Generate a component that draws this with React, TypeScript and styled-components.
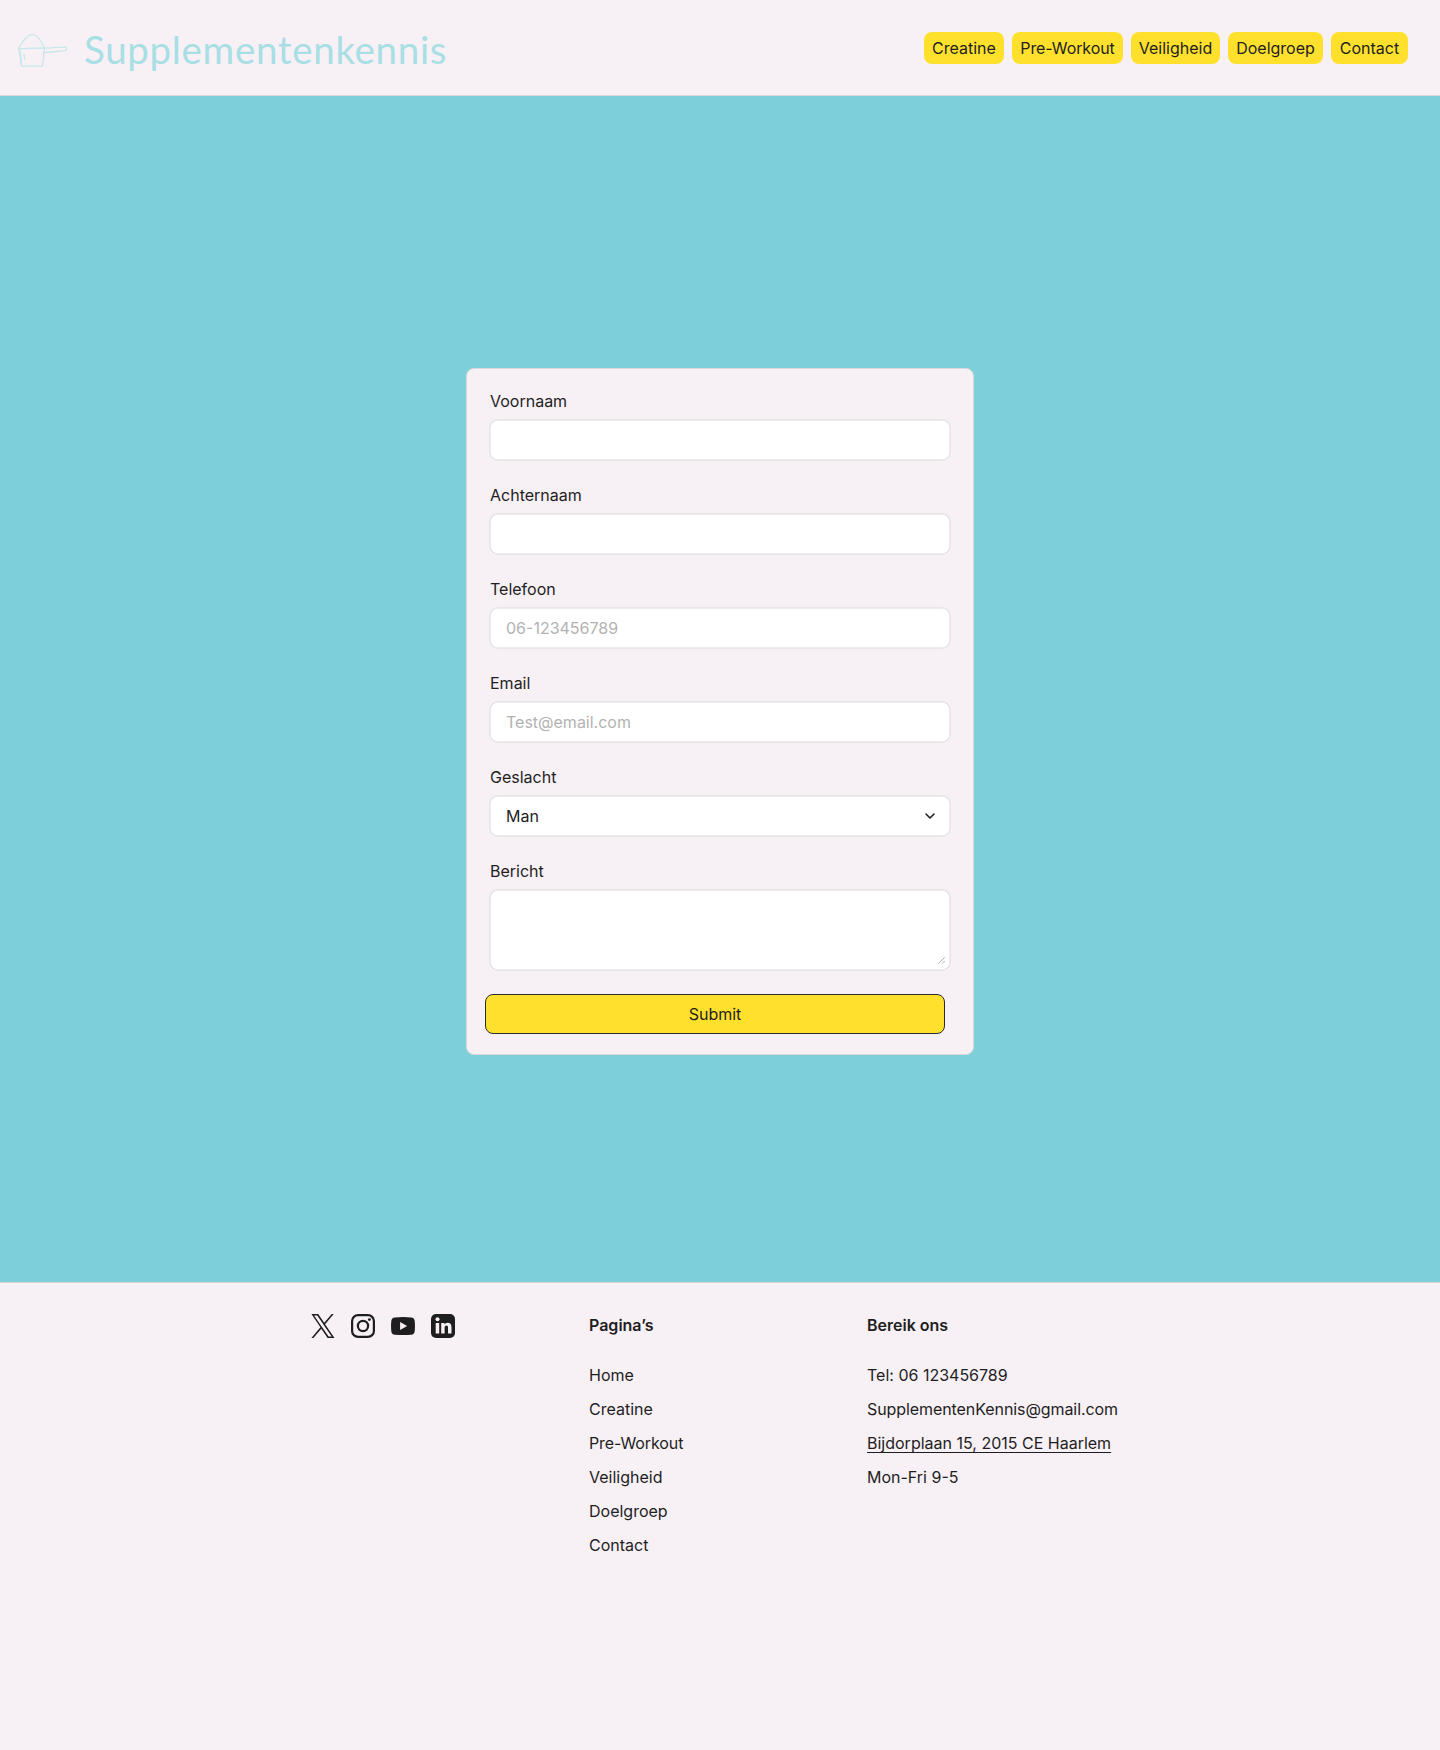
import React from 'react';
import styled, { createGlobalStyle } from 'styled-components';

const Global = createGlobalStyle`
  * { box-sizing: border-box; }
  body { margin: 0; background: #f7f0f5; color: #1e1e1e; font: 400 16px/22.4px Inter, sans-serif; }
  ul { list-style: none; margin: 0; padding: 0; }
  a { color: inherit; text-decoration: none; }
`;

const Page = styled.div`
  display: flex;
  flex-direction: column;
  width: 1440px;
  height: 1750px;
  background: #f7f0f5;
`;

const Header = styled.header`
  display: flex;
  align-items: center;
  justify-content: space-between;
  height: 96px;
  padding: 0 32px 0 16px;
  border-bottom: 1px solid #d9d9d9;
`;

const Brand = styled.a`
  display: flex;
  align-items: flex-start;
  gap: 16px;
  height: 62px;
`;

const Mark = styled.svg`
  margin-top: 16px;
`;

const Wordmark = styled.span`
  margin-top: 8px;
  font: 400 38.5px/48px Lato, sans-serif;
  letter-spacing: 0.68px;
  color: #a8dfe5;
  white-space: nowrap;
`;

const Nav = styled.nav`
  display: flex;
  gap: 8px;
`;

const NavLink = styled.a<{ $width: number; $tracking?: string }>`
  width: ${(p) => p.$width}px;
  height: 32px;
  padding: 8px 0;
  border-radius: 8px;
  background: #ffe12d;
  line-height: 16px;
  letter-spacing: ${(p) => p.$tracking ?? 'normal'};
  text-align: center;
  white-space: nowrap;
`;

const Main = styled.main`
  display: flex;
  justify-content: center;
  height: 1186px;
  padding-top: 272px;
  background: #7dcfda;
`;

const Card = styled.form`
  display: flex;
  flex-direction: column;
  gap: 24px;
  width: 508px;
  height: 687px;
  padding: 21px 23px 20px;
  border: 1px solid #d9d9d9;
  border-radius: 8px;
  background: #f7f0f5;
`;

const Field = styled.label`
  display: flex;
  flex-direction: column;
  gap: 8px;
  line-height: 22px;
`;

const control = `
  display: block;
  width: 460px;
  height: 40px;
  margin: 0;
  padding: 0 16px;
  border: 0;
  border-radius: 8px;
  outline: none;
  background: #fff;
  box-shadow: 0 0 0 0.5px #d9d9d9, inset 0 0 0 0.5px #d9d9d9;
  color: #1e1e1e;
  font: 400 16px/16px Inter, sans-serif;
`;

const Input = styled.input`
  ${control}
  &::placeholder { color: #b3b3b3; opacity: 1; }
`;

const SelectFrame = styled.span`
  ${control}
  display: flex;
  align-items: center;
  justify-content: space-between;
  padding: 0 12px 0 16px;
`;

const TextBox = styled.span`
  ${control}
  display: flex;
  align-items: flex-end;
  justify-content: flex-end;
  height: 80px;
  padding: 0 5px 6px 0;
`;

const Submit = styled.button`
  flex-shrink: 0;
  width: 460px;
  height: 40px;
  margin-left: -5px;
  padding: 0;
  border: 1px solid #2c2c2c;
  border-radius: 8px;
  background: #ffe12d;
  color: #1e1e1e;
  font: 400 16px/16px Inter, sans-serif;
`;

const Footer = styled.footer`
  display: grid;
  grid-template-columns: 262px 262px 262px;
  column-gap: 16px;
  flex: 1;
  padding: 31px 0 0 311px;
  border-top: 1px solid #d9d9d9;
`;

const Socials = styled.div`
  display: flex;
  gap: 16px;
  height: 24px;
`;

const Heading = styled.h2`
  margin: 0 0 28px;
  font: 600 16px/22px Inter, sans-serif;
`;

const Links = styled.ul`
  display: flex;
  flex-direction: column;
  gap: 12px;
  white-space: nowrap;
`;

const Item = styled.li<{ $underlined?: boolean; $tracking?: string }>`
  line-height: 22px;
  letter-spacing: ${(p) => p.$tracking ?? 'normal'};
  text-decoration: ${(p) => (p.$underlined ? 'underline' : 'none')};
  text-decoration-thickness: 1px;
  text-underline-offset: 3px;
  text-decoration-skip-ink: none;
`;

const Scoop = () => (
  <Mark width="52" height="38" viewBox="0 0 52 38" fill="none" stroke="#bfe7e9" strokeWidth="1.2" strokeLinecap="round" strokeLinejoin="round">
    <path d="M3 16 5.500 33H26.500L28.500 15" />
    <path d="M2.500 15.500C4 11.500 7 8.500 10 5 12 2.500 14 1.500 16.500 1.500 21 2 24.500 6.500 28.500 15" />
    <path d="M2.500 16.500C10 14 20 15.500 29 15 37 15 42 14 50 14L50.500 15 50 17.500C43 18 36 19.500 28.500 19.500M4 18.500 5.500 31M8 21C8 23 8.500 25 9 26" />
  </Mark>
);

const XLogo = () => (
  <svg width="24" height="24" viewBox="0 0 24 24" fill="#1e1e1e">
    <path fillRule="evenodd" d="M14.1 10.200 22.700 0h-2L13.200 8.800 7.200 0H.4l9 13.300L.4 24h2l7.900-9.300L16.600 24h6.900L14.100 10.200Zm-2.800 3.300-.9-1.300L3.100 1.600h3.100l5.900 8.500.9 1.300 7.700 11.100h-3.100l-6.300-9Z" />
  </svg>
);

const InstagramLogo = () => (
  <svg width="24" height="24" viewBox="0 0 24 24" fill="none" stroke="#1e1e1e" strokeWidth="2.200">
    <rect x="1.100" y="1.100" width="21.800" height="21.800" rx="6" />
    <circle cx="12" cy="12" r="5.100" />
    <circle cx="18.400" cy="5.600" r="1.450" fill="#1e1e1e" stroke="none" />
  </svg>
);

const YoutubeLogo = () => (
  <svg width="24" height="24" viewBox="0 0 24 24" fill="#1e1e1e">
    <path fillRule="evenodd" d="M3.800 3.400Q12 2.800 20.200 3.400 23.300 3.600 23.700 7 24.200 12 23.700 17.200 23.300 20.500 20.200 20.700 12 21.200 3.800 20.700.7 20.500.3 17.200-.2 12 .3 7 .7 3.600 3.800 3.400ZM9.100 8.100v7.800l7-3.900Z" />
  </svg>
);

const LinkedinLogo = () => (
  <svg width="24" height="24" viewBox="0 0 24 24">
    <rect width="24" height="24" rx="5" fill="#1e1e1e" />
    <g fill="#f7f0f5">
      <circle cx="6.500" cy="5.300" r="2" />
      <path d="M4.700 9h3.500v10.500H4.700ZM10.200 9h3.300v1.500c.6-1.100 1.800-1.800 3.200-1.800 2.700 0 3.800 1.700 3.800 4.500v6.300H17v-5.600c0-1.500-.4-2.300-1.500-2.300-1.300 0-1.900.9-1.900 2.400v5.500h-3.400Z" />
    </g>
  </svg>
);

const pages = [
  { name: 'Creatine', width: 80 },
  { name: 'Pre-Workout', width: 111, tracking: '-0.1px' },
  { name: 'Veiligheid', width: 89 },
  { name: 'Doelgroep', width: 95 },
  { name: 'Contact', width: 77 },
];
const fields = [
  { label: 'Voornaam' },
  { label: 'Achternaam' },
  { label: 'Telefoon', placeholder: '06-123456789' },
  { label: 'Email', placeholder: 'Test@email.com' },
];

export default function App() {
  return (
    <Page>
      <Global />
      <Header>
        <Brand href="#"><Scoop /><Wordmark>Supplementenkennis</Wordmark></Brand>
        <Nav>
          {pages.map((p) => (
            <NavLink key={p.name} href="#" $width={p.width} $tracking={p.tracking}>{p.name}</NavLink>
          ))}
        </Nav>
      </Header>
      <Main>
        <Card>
          {fields.map((f) => (
            <Field key={f.label}>{f.label}<Input placeholder={f.placeholder} /></Field>
          ))}
          <Field as="div">
            Geslacht
            <SelectFrame>
              Man
              <svg width="16" height="16" viewBox="0 0 16 16" fill="none" stroke="#1e1e1e" strokeWidth="1.600" strokeLinecap="round" strokeLinejoin="round">
                <path d="m4 6 4 4 4-4" />
              </svg>
            </SelectFrame>
          </Field>
          <Field as="div">
            Bericht
            <TextBox>
              <svg width="7" height="7" viewBox="0 0 7 7" stroke="#b3b3b3" fill="none">
                <path d="M.3 6.700 6.700.3M4 6.700 6.700 4" />
              </svg>
            </TextBox>
          </Field>
          <Submit type="button">Submit</Submit>
        </Card>
      </Main>
      <Footer>
        <Socials><XLogo /><InstagramLogo /><YoutubeLogo /><LinkedinLogo /></Socials>
        <div>
          <Heading>Pagina’s</Heading>
          <Links>
            <Item><a href="#">Home</a></Item>
            {pages.map((p) => (
              <Item key={p.name} $tracking={p.tracking}><a href="#">{p.name}</a></Item>
            ))}
          </Links>
        </div>
        <div>
          <Heading>Bereik ons</Heading>
          <Links>
            <Item>Tel: 06 123456789</Item>
            <Item $tracking="-0.08px">SupplementenKennis@gmail.com</Item>
            <Item $underlined>Bijdorplaan 15, 2015 CE Haarlem</Item>
            <Item>Mon-Fri 9-5</Item>
          </Links>
        </div>
      </Footer>
    </Page>
  );
}
